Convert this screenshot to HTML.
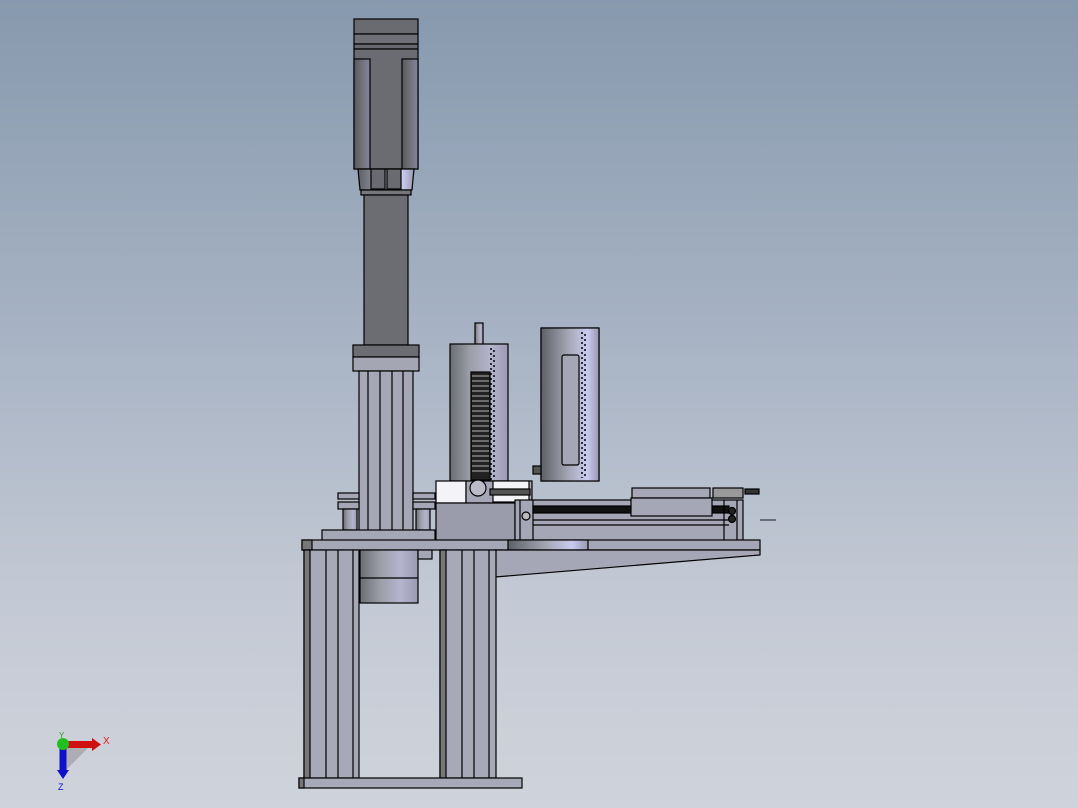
<!DOCTYPE html>
<html><head><style>
html,body{margin:0;padding:0}
body{width:1078px;height:808px;overflow:hidden;background:linear-gradient(#8799ae 0%,#a6b2c3 40%,#c4cad5 75%,#cfd3db 100%);font-family:"Liberation Sans",sans-serif}
svg{position:absolute;left:0;top:0}
</style></head><body>
<svg width="1078" height="808" viewBox="0 0 1078 808">
<defs>
<linearGradient id="cyl" x1="0" x2="1"><stop offset="0" stop-color="#6c6e76"/><stop offset=".35" stop-color="#9c9ea8"/><stop offset=".7" stop-color="#b4b4cc"/><stop offset="1" stop-color="#9a9ab4"/></linearGradient>
<linearGradient id="cyl2" x1="0" x2="1"><stop offset="0" stop-color="#5e6068"/><stop offset=".5" stop-color="#a8aab8"/><stop offset=".8" stop-color="#cacaf0"/><stop offset="1" stop-color="#9898b0"/></linearGradient>
<linearGradient id="mot" x1="0" x2="1"><stop offset="0" stop-color="#585a60"/><stop offset=".5" stop-color="#707278"/><stop offset="1" stop-color="#8484a0"/></linearGradient>
</defs>
<g stroke="#000" stroke-width="1.2">
<rect x="354" y="19" width="64" height="15" fill="#6a6b70"/>
<rect x="354" y="34" width="64" height="10" fill="#707176"/>
<rect x="354" y="44" width="64" height="5" fill="#68696e"/>
<rect x="354" y="49" width="64" height="120" fill="#6b6c71"/>
<rect x="354" y="59" width="16" height="110" fill="url(#mot)"/>
<rect x="402" y="59" width="16" height="110" fill="url(#mot)"/>
<path d="M358 169 L414 169 L412 190 L360 190 Z" fill="url(#cyl2)"/>
<rect x="371" y="169" width="14" height="20" fill="#6a6b70"/>
<rect x="387" y="169" width="14" height="20" fill="#6a6b70"/>
<rect x="361" y="190" width="50" height="5" fill="#76777c"/>
<rect x="364" y="195" width="44" height="150" fill="#6c6d72"/>
<rect x="353" y="345" width="66" height="12" fill="#6c6d72"/>
<rect x="353" y="357" width="66" height="14" fill="#a5a6b4"/>
<rect x="359" y="371" width="54" height="170" fill="#a6a7b6"/>
<line x1="368" y1="371" x2="368" y2="541"/><line x1="380" y1="371" x2="380" y2="541"/><line x1="392" y1="371" x2="392" y2="541"/><line x1="403" y1="371" x2="403" y2="541"/>
<rect x="338" y="493" width="21" height="6" fill="#a6a7b6"/>
<rect x="338" y="502" width="21" height="7" fill="#a6a7b6"/>
<rect x="413" y="493" width="22" height="6" fill="#a6a7b6"/>
<rect x="413" y="502" width="22" height="7" fill="#a6a7b6"/>
<rect x="343" y="509" width="14" height="21" fill="url(#cyl)"/>
<rect x="416" y="509" width="14" height="21" fill="url(#cyl)"/>
<rect x="322" y="530" width="113" height="11" fill="#a6a7b6"/>
<rect x="475" y="323" width="8" height="22" fill="url(#cyl)"/>
<rect x="450" y="344" width="58" height="137" fill="url(#cyl)"/>
<rect x="471" y="372" width="19" height="108" fill="#222"/>
<g stroke="#999" stroke-width="1.2"><path d="M472 376h17M472 381h17M472 386h17M472 391h17M472 396h17M472 401h17M472 406h17M472 411h17M472 416h17M472 421h17M472 426h17M472 431h17M472 436h17M472 441h17M472 446h17M472 451h17M472 456h17M472 461h17M472 466h17M472 471h17"/></g>
<g stroke-width="1.5" stroke-dasharray="2 3"><line x1="491" y1="348" x2="491" y2="480"/><line x1="494" y1="350" x2="494" y2="480"/><line x1="582" y1="332" x2="582" y2="478"/><line x1="585" y1="334" x2="585" y2="478"/></g>
<rect x="541" y="328" width="58" height="153" fill="url(#cyl2)" fill-opacity="0"/>
<rect x="541" y="328" width="58" height="153" fill="url(#cyl2)"/>
<g stroke-width="1.5" stroke-dasharray="2 3"><line x1="582" y1="332" x2="582" y2="478"/><line x1="585" y1="334" x2="585" y2="478"/></g>
<rect x="562" y="355" width="17" height="110" rx="2" fill="#a6a7b6"/>
<rect x="533" y="466" width="8" height="8" fill="#555"/>
<rect x="436" y="481" width="30" height="22" fill="#f4f4f8"/>
<rect x="466" y="481" width="66" height="22" fill="#a6a7b6"/>
<circle cx="478" cy="488" r="8" fill="#bbbcc8"/>
<rect x="493" y="481" width="36" height="21" fill="#f4f4f8"/>
<rect x="490" y="489" width="40" height="6" fill="#555"/>
<rect x="436" y="503" width="79" height="38" fill="#9a9cab"/>
<rect x="632" y="488" width="78" height="10" fill="#a6a7b6"/>
<rect x="515" y="500" width="228" height="41" fill="#a6a7b6"/>
<rect x="533" y="506" width="196" height="7" fill="#111"/>
<rect x="631" y="498" width="81" height="18" fill="#a6a7b6"/>
<line x1="533" y1="520" x2="729" y2="520"/><line x1="533" y1="525" x2="729" y2="525"/>
<line x1="520" y1="500" x2="520" y2="541"/><line x1="533" y1="500" x2="533" y2="541"/><line x1="724" y1="500" x2="724" y2="541"/><line x1="737" y1="500" x2="737" y2="541"/>
<circle cx="526" cy="516" r="4" fill="#bbb"/>
<circle cx="732" cy="511" r="3.5" fill="#222"/><circle cx="732" cy="519" r="3.5" fill="#222"/>
<rect x="713" y="488" width="30" height="10" fill="#999"/>
<rect x="745" y="489" width="14" height="5" fill="#333"/>
<line x1="760" y1="520" x2="776" y2="520" stroke="#333"/>
<rect x="302" y="540" width="458" height="10" fill="#a6a7b6"/>
<rect x="302" y="540" width="10" height="10" fill="#777"/>
<rect x="508" y="540" width="80" height="10" fill="url(#cyl2)"/>
<path d="M495 550 L760 550 L760 555 L495 577 Z" fill="#a6a7b6"/>
<rect x="360" y="550" width="58" height="53" fill="url(#cyl)"/>
<line x1="360" y1="578" x2="418" y2="578"/>
<rect x="418" y="550" width="14" height="9" fill="#a6a7b6"/>
<rect x="304" y="550" width="55" height="228" fill="#a8a9b8"/>
<rect x="304" y="550" width="6" height="228" fill="#777"/>
<line x1="326" y1="550" x2="326" y2="778"/><line x1="338" y1="550" x2="338" y2="778"/><line x1="353" y1="550" x2="353" y2="778"/>
<rect x="440" y="550" width="56" height="228" fill="#a8a9b8"/>
<rect x="440" y="550" width="6" height="228" fill="#777"/>
<line x1="462" y1="550" x2="462" y2="778"/><line x1="474" y1="550" x2="474" y2="778"/><line x1="489" y1="550" x2="489" y2="778"/>
<rect x="299" y="778" width="223" height="10" fill="#a8a9b8"/>
<rect x="299" y="778" width="5" height="10" fill="#777"/>
</g>
<path d="M63 745 A28 28 0 0 1 91 745 L63 773 Z" fill="#8c8c90" opacity=".5"/>
<rect x="63" y="741" width="30" height="7" fill="#d01010"/>
<path d="M92 738 L101 744.5 L92 751 Z" fill="#d01010"/>
<rect x="59.5" y="745" width="7" height="28" fill="#1010c8"/>
<path d="M57 770 L69 770 L63 779 Z" fill="#1010c8"/>
<circle cx="63" cy="744" r="6" fill="#20c020"/>
<text x="103" y="744" font-size="10" fill="#e02020">X</text>
<text x="58" y="790" font-size="9" fill="#1010c8">Z</text>
<text x="59" y="738" font-size="8" fill="#20a020">Y</text>
</svg>
</body></html>
